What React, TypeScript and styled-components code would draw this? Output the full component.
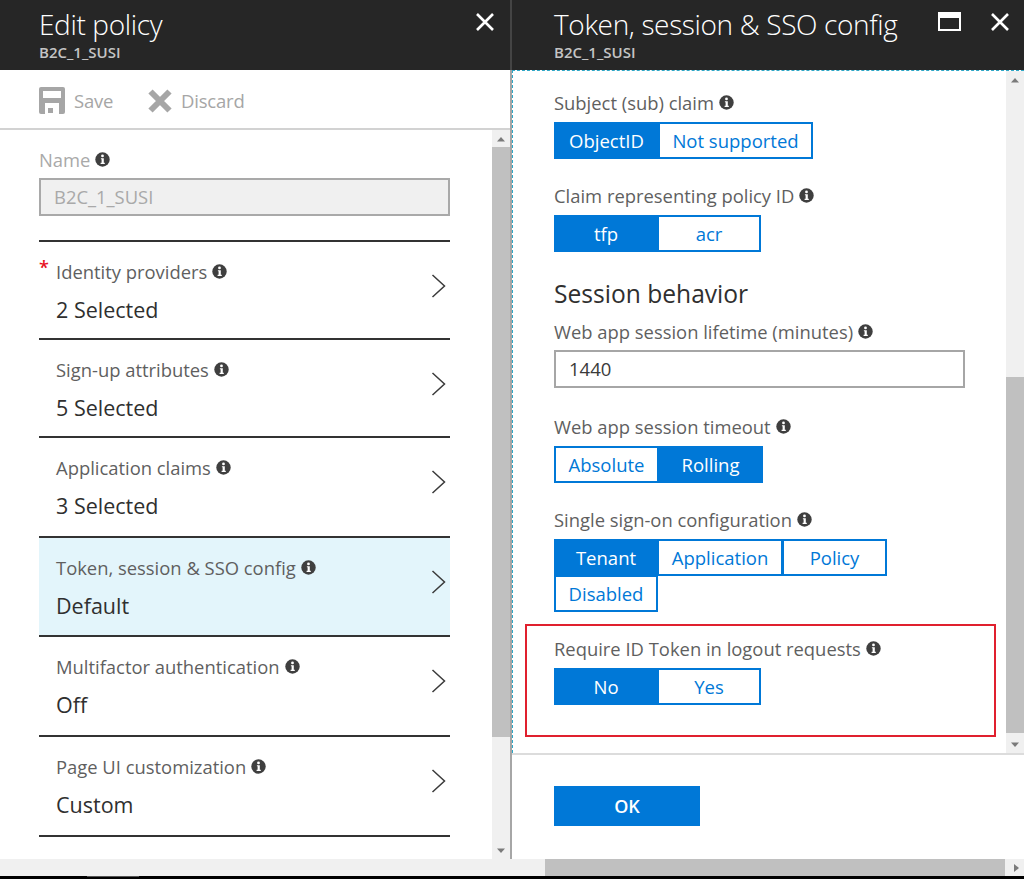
import React from "react";
import styled, { createGlobalStyle } from "styled-components";

const Global = createGlobalStyle`
  html, body { margin: 0; padding: 0; background: #fff; }
  body { font-family: "Open Sans", "Noto Sans", "Liberation Sans", sans-serif; }
  * { box-sizing: border-box; }
`;

const Page = styled.div`
  width: 1024px; height: 879px; overflow: hidden; display: flex; flex-direction: column; background: #fff;
`;
const Panels = styled.div`display: flex; height: 859px;`;
const LeftPanel = styled.section`width: 510px; display: flex; flex-direction: column; flex: none;`;
const Divider = styled.div`
  width: 2px; flex: none; background: linear-gradient(#444 0 70px, #a6a6a6 70px);
`;
const RightPanel = styled.section`flex: 1; min-width: 0; display: flex; flex-direction: column;`;

const Header = styled.header`
  height: 70px; flex: none; background: #262626; color: #fff; position: relative;
  padding: 5px 0 0 ${(p: { $left: number }) => p.$left}px;
`;
const Title = styled.h1`
  margin: 0; font-size: 28px; font-weight: 300; line-height: 38px; letter-spacing: -0.35px; color: #fff; white-space: nowrap;
`;
const Subtitle = styled.div`
  font-size: 15px; font-weight: 600; line-height: 18px; color: #c4c4c4; letter-spacing: 0;
`;
const HeaderIcons = styled.div`
  position: absolute; top: 12px; right: ${(p: { $right: number }) => p.$right}px; display: flex; gap: 28px; align-items: center;
`;

const Toolbar = styled.div`
  height: 60px; flex: none; border-bottom: 2px solid #d2d2d2; display: flex; align-items: center; padding: 3px 0 0 39px;
`;
const ToolItem = styled.div`
  display: flex; align-items: center; gap: ${(p: { $gap: number; $width: number }) => p.$gap}px; width: ${(p) => p.$width}px;
  color: #a6a6a6; font-size: 18.5px; letter-spacing: -0.2px;
`;

const Body = styled.div`flex: 1; min-height: 0; display: flex;`;
const LeftContent = styled.div`flex: 1; min-width: 0; padding: 17px 42px 0 39px;`;

const FieldLabel = styled.div`
  display: flex; align-items: center; gap: 5px; height: 24px; font-size: 18.4px;
  color: ${(p: { $muted?: boolean }) => (p.$muted ? "#a9a9a9" : "#5f5f5f")}; white-space: nowrap;
`;
const DisabledInput = styled.div`
  height: 38px; margin-top: 7px; border: 2px solid #a9a9a9; background: #f0f0f0; color: #a9a9a9;
  font-size: 18.4px; line-height: 34px; padding-left: 13px;
`;
const List = styled.div`margin-top: 24px; border-top: 2px solid #333;`;
const Row = styled.div`
  height: ${(p: { $h: number; $active?: boolean }) => p.$h}px; border-bottom: 2px solid #333; padding: 17px 0 0 17px; position: relative;
  background: ${(p) => (p.$active ? "#e3f5fb" : "transparent")};
`;
const Star = styled.span`
  position: absolute; left: 0; top: 14px; color: #e81123; font-size: 18px; line-height: 22px; font-weight: 600;
`;
const RowValue = styled.div`
  font-size: 21.5px; color: #2f2f2f; line-height: 28px; margin-top: 13px;
`;
const ChevronWrap = styled.div`position: absolute; right: 4px; top: 32px; display: flex;`;

const ScrollTrack = styled.div`
  width: 18px; flex: none; background: #f0f0f0; display: flex; flex-direction: column; align-items: stretch;
`;
const Arrow = styled.div`
  height: 17px; flex: none; display: flex; align-items: center; justify-content: center;
`;
const Thumb = styled.div`
  background: #c0c0c0; flex: ${(p: { $h?: number }) => (p.$h ? `0 0 ${p.$h}px` : "1")};
`;
const Gap = styled.div`flex: ${(p: { $h?: number }) => (p.$h ? `0 0 ${p.$h}px` : "1")};`;

const ScrollArea = styled.div`
  flex: 1; min-height: 0; display: flex; border-top: 1px dashed #2ea6c6; border-left: 1px dashed #2ea6c6;
`;
const RightContent = styled.div`flex: 1; min-width: 0; padding: 19px 41px 0 41px; overflow: hidden;`;
const Field = styled.div`margin-bottom: ${(p: { $mb?: number }) => p.$mb ?? 26}px;`;
const Segments = styled.div`display: flex; flex-wrap: wrap; margin-top: 8px; width: 340px;`;
const Segment = styled.div`
  width: ${(p: { $w: number; $on?: boolean }) => p.$w}px; height: 37px; display: flex; align-items: center; justify-content: center;
  border: 2px solid #0078d7; margin-right: -1px;
  background: ${(p) => (p.$on ? "#0078d7" : "#fff")};
  color: ${(p) => (p.$on ? "#fff" : "#0078d7")};
  font-size: 18.5px; margin-bottom: -1px;
`;
const SectionTitle = styled.h2`
  margin: 0 0 9px; font-size: 24.6px; font-weight: 400; color: #2f2f2f; line-height: 32px;
`;
const TextInput = styled.div`
  height: 38px; margin-top: 7px; width: 411px; border: 2px solid #a6a6a6; color: #3a3a3a;
  font-size: 18.5px; line-height: 34px; padding-left: 13px;
`;
const Highlight = styled.div`
  margin: 0 -29px; width: 471px; height: 113px; border: 2px solid #e0202e; padding: 10px 0 0 27px;
`;
const Footer = styled.footer`
  height: 106px; flex: none; border-top: 2px solid #dcdcdc; padding: 31px 0 0 42px;
`;
const OkButton = styled.button`
  width: 146px; height: 40px; background: #0078d7; color: #fff; border: 0; padding: 0; font: 600 18px "Open Sans", sans-serif;
`;

const HScroll = styled.div`height: 17px; flex: none; background: #f0f0f0; display: flex;`;
const HGap = styled.div`width: 545px; flex: none;`;
const HThumb = styled.div`width: 460px; flex: none; background: #c0c0c0;`;
const HArrow = styled.div`flex: 1; display: flex; align-items: center; justify-content: flex-end; padding-right: 3px;`;
const BlackBar = styled.div`height: 3px; flex: none; background: #000; display: flex; padding-left: 87px;`;
const BlackMark = styled.div`width: 52px; height: 1px; background: #555;`;

const Info = () => (
  <svg width="15" height="15" viewBox="0 0 15 15" style={{ flex: "none" }}>
    <circle cx="7.5" cy="7.5" r="7.2" fill="#3f3f3f" />
    <circle cx="7.5" cy="3.9" r="1.4" fill="#fff" />
    <path d="M5.9 6.2h2.9v4.6h1v1.1H5.6v-1.1h1V7.3h-.7z" fill="#fff" />
  </svg>
);
const CloseIcon = () => (
  <svg width="20" height="20" viewBox="0 0 20 20">
    <path d="M2 2L18 18M18 2L2 18" stroke="#fff" strokeWidth="2.6" />
  </svg>
);
const MaxIcon = () => (
  <svg width="24" height="20" viewBox="0 0 24 20">
    <rect x="1" y="1" width="21" height="17" fill="none" stroke="#fff" strokeWidth="2" />
    <rect x="1" y="1" width="21" height="5" fill="#fff" />
  </svg>
);
const SaveIcon = () => (
  <svg width="26" height="27" viewBox="0 0 26 27">
    <path d="M2 0h22a2 2 0 0 1 2 2v23a2 2 0 0 1-2 2H2a2 2 0 0 1-2-2V2a2 2 0 0 1 2-2z" fill="#a6a6a6" />
    <rect x="4" y="4" width="18" height="7" fill="#fff" />
    <path d="M6 16h14v11H6z" fill="#fff" />
    <rect x="9" y="21" width="5" height="5" fill="#a6a6a6" />
  </svg>
);
const DiscardIcon = () => (
  <svg width="24" height="24" viewBox="0 0 24 24">
    <path d="M2.5 2.5L21.5 21.5M21.5 2.5L2.5 21.5" stroke="#a6a6a6" strokeWidth="6" />
  </svg>
);
const Chevron = () => (
  <svg width="15" height="24" viewBox="0 0 15 24">
    <path d="M1.5 1L13.5 12L1.5 23" fill="none" stroke="#3a3a3a" strokeWidth="1.5" />
  </svg>
);
const Tri = ({ d }: { d: "up" | "down" | "right" }) => (
  <svg width="10" height="8" viewBox="0 0 10 8">
    <path d={d === "up" ? "M1 6.5L5 2L9 6.5z" : d === "down" ? "M1 1.5L9 1.5L5 6z" : "M3 0L8 4L3 8z"} fill="#7a7a7a" />
  </svg>
);

const rows: { label: string; value: string; h: number; star?: boolean; active?: boolean }[] = [
  { label: "Identity providers", value: "2 Selected", h: 98, star: true },
  { label: "Sign-up attributes", value: "5 Selected", h: 98 },
  { label: "Application claims", value: "3 Selected", h: 100 },
  { label: "Token, session & SSO config", value: "Default", h: 99, active: true },
  { label: "Multifactor authentication", value: "Off", h: 100 },
  { label: "Page UI customization", value: "Custom", h: 100 },
];

type Seg = { t: string; w: number; on?: boolean };
const Toggle = ({ items }: { items: Seg[] }) => (
  <Segments>
    {items.map((s) => (
      <Segment key={s.t} $w={s.w} $on={s.on}>{s.t}</Segment>
    ))}
  </Segments>
);

export default function App() {
  return (
    <Page>
      <Global />
      <Panels>
        <LeftPanel>
          <Header $left={39}>
            <Title>Edit policy</Title>
            <Subtitle>B2C_1_SUSI</Subtitle>
            <HeaderIcons $right={15}><CloseIcon /></HeaderIcons>
          </Header>
          <Toolbar>
            <ToolItem $gap={9} $width={109}><SaveIcon /><span>Save</span></ToolItem>
            <ToolItem $gap={9} $width={120}><DiscardIcon /><span>Discard</span></ToolItem>
          </Toolbar>
          <Body>
            <LeftContent>
              <FieldLabel $muted>Name <Info /></FieldLabel>
              <DisabledInput>B2C_1_SUSI</DisabledInput>
              <List>
                {rows.map((r) => (
                  <Row key={r.label} $h={r.h} $active={r.active}>
                    {r.star && <Star>*</Star>}
                    <FieldLabel>{r.label} <Info /></FieldLabel>
                    <RowValue>{r.value}</RowValue>
                    <ChevronWrap><Chevron /></ChevronWrap>
                  </Row>
                ))}
              </List>
            </LeftContent>
            <ScrollTrack>
              <Arrow><Tri d="up" /></Arrow>
              <Thumb $h={590} />
              <Gap />
              <Arrow><Tri d="down" /></Arrow>
            </ScrollTrack>
          </Body>
        </LeftPanel>
        <Divider />
        <RightPanel>
          <Header $left={42}>
            <Title>Token, session &amp; SSO config</Title>
            <Subtitle>B2C_1_SUSI</Subtitle>
            <HeaderIcons $right={14}><MaxIcon /><CloseIcon /></HeaderIcons>
          </Header>
          <ScrollArea>
            <RightContent>
              <Field $mb={25}>
                <FieldLabel>Subject (sub) claim <Info /></FieldLabel>
                <Toggle items={[{ t: "ObjectID", w: 105, on: true }, { t: "Not supported", w: 155 }]} />
              </Field>
              <Field $mb={27}>
                <FieldLabel>Claim representing policy ID <Info /></FieldLabel>
                <Toggle items={[{ t: "tfp", w: 104, on: true }, { t: "acr", w: 104 }]} />
              </Field>
              <Field $mb={26}>
                <SectionTitle>Session behavior</SectionTitle>
                <FieldLabel>Web app session lifetime (minutes) <Info /></FieldLabel>
                <TextInput>1440</TextInput>
              </Field>
              <Field $mb={25}>
                <FieldLabel>Web app session timeout <Info /></FieldLabel>
                <Toggle items={[{ t: "Absolute", w: 105 }, { t: "Rolling", w: 105, on: true }]} />
              </Field>
              <Field $mb={13}>
                <FieldLabel>Single sign-on configuration <Info /></FieldLabel>
                <Toggle items={[{ t: "Tenant", w: 104, on: true }, { t: "Application", w: 126 }, { t: "Policy", w: 105 }, { t: "Disabled", w: 104 }]} />
              </Field>
              <Highlight>
                <FieldLabel>Require ID Token in logout requests <Info /></FieldLabel>
                <Toggle items={[{ t: "No", w: 104, on: true }, { t: "Yes", w: 104 }]} />
              </Highlight>
            </RightContent>
            <ScrollTrack>
              <Arrow><Tri d="up" /></Arrow>
              <Gap $h={289} />
              <Thumb $h={356} />
              <Gap />
              <Arrow><Tri d="down" /></Arrow>
            </ScrollTrack>
          </ScrollArea>
          <Footer>
            <OkButton>OK</OkButton>
          </Footer>
        </RightPanel>
      </Panels>
      <HScroll>
        <HGap />
        <HThumb />
        <HArrow><Tri d="right" /></HArrow>
      </HScroll>
      <BlackBar><BlackMark /></BlackBar>
    </Page>
  );
}
